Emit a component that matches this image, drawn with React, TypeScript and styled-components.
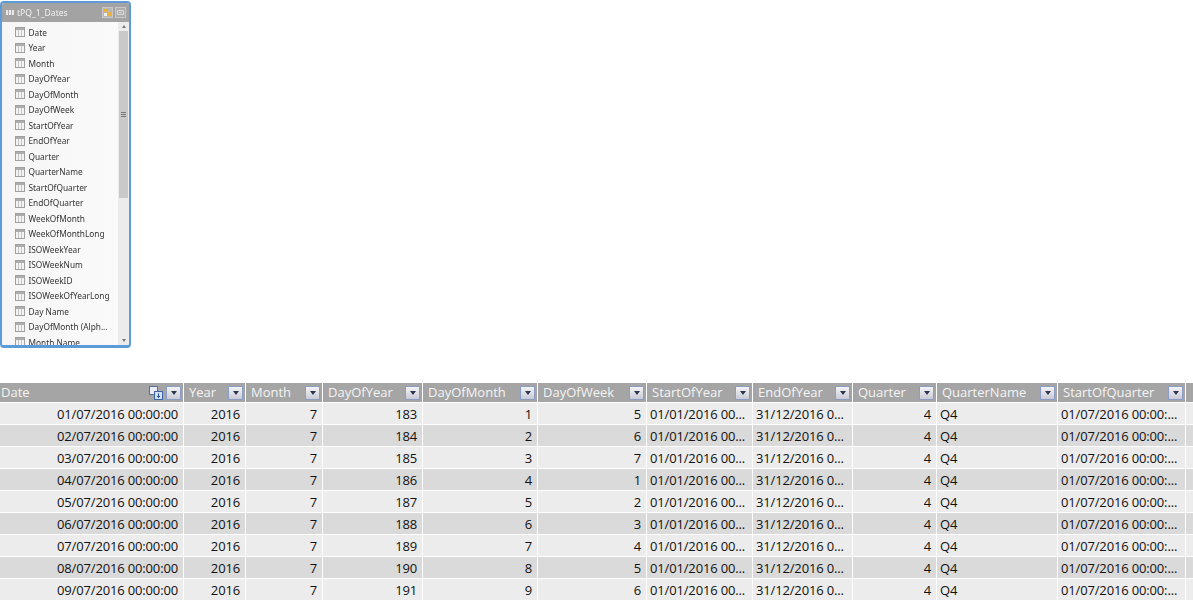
import React from 'react';
import styled, { createGlobalStyle } from 'styled-components';

const Global = createGlobalStyle`
  html, body { margin: 0; padding: 0; background: #fff; overflow: hidden; }
  #root { width: 1193px; height: 600px; overflow: hidden; }
`;
const Page = styled.div`
  display: flex; flex-direction: column; width: 1193px; height: 600px; padding-top: 1px;
  box-sizing: border-box; overflow: hidden;
`;
const Panel = styled.section`
  width: 131px; height: 347px; box-sizing: border-box; border: 2px solid #5b9bd9; border-bottom-width: 3px;
  border-radius: 4px; background: #f7f7f7; display: flex; flex-direction: column; overflow: hidden; flex: none;
`;
const TitleBar = styled.header`
  height: 19px; flex: none; background: #a3a3a3; display: flex; align-items: center; padding: 0 3px 0 4px; gap: 3px;
  font: 8.6px "Noto Sans", sans-serif; color: #f1f1f1; filter: blur(.35px);
`;
const TitleText = styled.span` flex: 1; `;
const PanelBody = styled.div` flex: 1; display: flex; min-height: 0; `;
const FieldList = styled.ul`
  list-style: none; margin: 0; padding: 2.5px 0 0 13px; flex: 1; overflow: hidden; min-width: 0;
  background: linear-gradient(90deg, #f6f6f6, #fafafa);
`;
const Field = styled.li`
  height: 15.5px; display: flex; align-items: center; gap: 3.5px; white-space: nowrap;
  font: 8.3px "Noto Sans", sans-serif; color: #333; filter: blur(.35px);
`;
const Scroll = styled.div`
  width: 11px; flex: none; background: #ececec; display: flex; flex-direction: column; align-items: center;
`;
const ScrollArrow = styled.div<{ $down?: boolean }>`
  height: 9px; flex: none; width: 100%; display: flex; align-items: center; justify-content: center;
  &::after { content: ''; border-left: 2px solid transparent; border-right: 2px solid transparent;
    ${p => p.$down ? 'border-top: 3px solid #777;' : 'border-bottom: 3px solid #777;'} }
`;
const ScrollGap = styled.div` flex: 1; `;
const Thumb = styled.div`
  width: 9px; height: 167px; flex: none; background: #c9c9c9; display: flex; align-items: center; justify-content: center;
  &::after { content: ''; width: 5px; height: 5px; background: repeating-linear-gradient(#777 0 1px, #c9c9c9 1px 2px); }
`;
const Table = styled.div`
  margin-top: 35px; display: flex; flex-direction: column; width: 1193px; flex: none;
`;
const cols = '183px 61px 76px 99px 114px 108px 105px 99px 83px 120px 127px 7px';
const HeaderRow = styled.div`
  display: grid; grid-template-columns: ${cols}; column-gap: 1px; height: 19px; margin-bottom: 1px;
`;
const HeaderCell = styled.div<{ $first?: boolean }>`
  background: #a5a5a5; color: #f4f4f4; display: flex; align-items: center; gap: 3px;
  padding: 0 2px 0 ${p => p.$first ? '1px' : '5px'};
  font: 13px "Open Sans", sans-serif; overflow: hidden; white-space: nowrap;
`;
const HeadLabel = styled.span` flex: 1; margin-top: -1px; `;
const FilterBtn = styled.span`
  width: 15px; height: 14px; box-sizing: border-box; flex: none; border: 1px solid #8c9dc4;
  background: linear-gradient(#f4f4f6, #c9cbd6); display: flex; align-items: center; justify-content: center;
  &::after { content: ''; border-left: 3.5px solid transparent; border-right: 3.5px solid transparent; border-top: 4px solid #2c3550; }
`;
const Row = styled.div`
  display: grid; grid-template-columns: ${cols}; column-gap: 1px; height: 21px; margin-bottom: 1px;
`;
const Cell = styled.div<{ $left?: boolean; $alt: boolean }>`
  background: ${p => p.$alt ? '#dadada' : '#ececec'}; color: #111;
  display: flex; align-items: center; justify-content: ${p => p.$left ? 'flex-start' : 'flex-end'};
  padding: 0 5px 0 3px; font: 13px "Open Sans", sans-serif; letter-spacing: -.15px; white-space: nowrap; overflow: hidden;
`;
const IconSvg = styled.svg` flex: none; `;
const PinSvg = styled(IconSvg)` margin-right: -1px; `;

const TableIcon = () => (
  <IconSvg width="10" height="10" viewBox="0 0 10 10">
    <rect x=".5" y=".5" width="9" height="9" fill="#f4f4f4" stroke="#a0a0a0" />
    <rect x="1" y="1" width="8" height="2" fill="#adadad" />
    <path d="M3.500 3v6M6.500 3v6" stroke="#c4c4c4" strokeWidth="1" fill="none" />
  </IconSvg>
);
const GridGlyph = () => (
  <IconSvg width="8" height="7" viewBox="0 0 8 7">
    <path d="M0 1h8v5H0z" fill="#e8e8e8" />
    <path d="M2.500 1v5M5.500 1v5" stroke="#a3a3a3" strokeWidth=".8" />
  </IconSvg>
);
const TitleButtons = () => (
  <>
    <PinSvg width="11" height="11" viewBox="0 0 11 11">
      <rect x=".5" y=".5" width="10" height="10" fill="#b6b6b6" stroke="#c9c9c9" />
      <rect x="2" y="2" width="3" height="3" fill="#e8b23c" />
      <rect x="6" y="5" width="3" height="4" fill="#e8b23c" />
      <rect x="2" y="6" width="3" height="3" fill="#f0f0f0" />
    </PinSvg>
    <IconSvg width="11" height="11" viewBox="0 0 11 11">
      <rect x=".5" y=".5" width="10" height="10" fill="#adadad" stroke="#c9c9c9" />
      <path d="M2.500 3.500h6v4h-6zM4 5.500h3" fill="none" stroke="#dcdcdc" />
    </IconSvg>
  </>
);
const SortIcon = () => (
  <IconSvg width="14" height="14" viewBox="0 0 14 14">
    <rect x=".5" y=".5" width="8" height="8" fill="#e9edf5" stroke="#5a6f96" />
    <rect x="5.500" y="5.500" width="8" height="8" fill="#d4dff0" stroke="#3f64a8" />
    <path d="M9.500 7.500v4M8 10l1.500 1.500L11 10" fill="none" stroke="#24509c" />
  </IconSvg>
);

const fields = ['Date','Year','Month','DayOfYear','DayOfMonth','DayOfWeek','StartOfYear','EndOfYear','Quarter','QuarterName','StartOfQuarter','EndOfQuarter','WeekOfMonth','WeekOfMonthLong','ISOWeekYear','ISOWeekNum','ISOWeekID','ISOWeekOfYearLong','Day Name','DayOfMonth (Alph...','Month Name'];
const headers = ['Date','Year','Month','DayOfYear','DayOfMonth','DayOfWeek','StartOfYear','EndOfYear','Quarter','QuarterName','StartOfQuarter'];
const rows = [
  [1,183,1,5],[2,184,2,6],[3,185,3,7],[4,186,4,1],[5,187,5,2],[6,188,6,3],[7,189,7,4],[8,190,8,5],[9,191,9,6],
];
const pad = (n: number) => String(n).padStart(2, '0');

export default function App() {
  return (
    <Page>
      <Global />
      <Panel>
        <TitleBar>
          <GridGlyph />
          <TitleText>tPQ_1_Dates</TitleText>
          <TitleButtons />
        </TitleBar>
        <PanelBody>
          <FieldList>
            {fields.map(f => (
              <Field key={f}><TableIcon />{f}</Field>
            ))}
          </FieldList>
          <Scroll>
            <ScrollArrow />
            <Thumb />
            <ScrollGap />
            <ScrollArrow $down />
          </Scroll>
        </PanelBody>
      </Panel>
      <Table>
        <HeaderRow>
          {headers.map((h, i) => (
            <HeaderCell key={h} $first={i === 0}>
              <HeadLabel>{h}</HeadLabel>
              {i === 0 && <SortIcon />}
              <FilterBtn />
            </HeaderCell>
          ))}
          <HeaderCell />
        </HeaderRow>
        {rows.map(([d, doy, dom, dow], i) => {
          const alt = i % 2 === 1;
          return (
            <Row key={d}>
              <Cell $alt={alt}>{`${pad(d)}/07/2016 00:00:00`}</Cell>
              <Cell $alt={alt}>2016</Cell>
              <Cell $alt={alt}>7</Cell>
              <Cell $alt={alt}>{doy}</Cell>
              <Cell $alt={alt}>{dom}</Cell>
              <Cell $alt={alt}>{dow}</Cell>
              <Cell $alt={alt} $left>01/01/2016 00...</Cell>
              <Cell $alt={alt} $left>31/12/2016 0...</Cell>
              <Cell $alt={alt}>4</Cell>
              <Cell $alt={alt} $left>Q4</Cell>
              <Cell $alt={alt} $left>01/07/2016 00:00:...</Cell>
              <Cell $alt={alt} />
            </Row>
          );
        })}
      </Table>
    </Page>
  );
}
